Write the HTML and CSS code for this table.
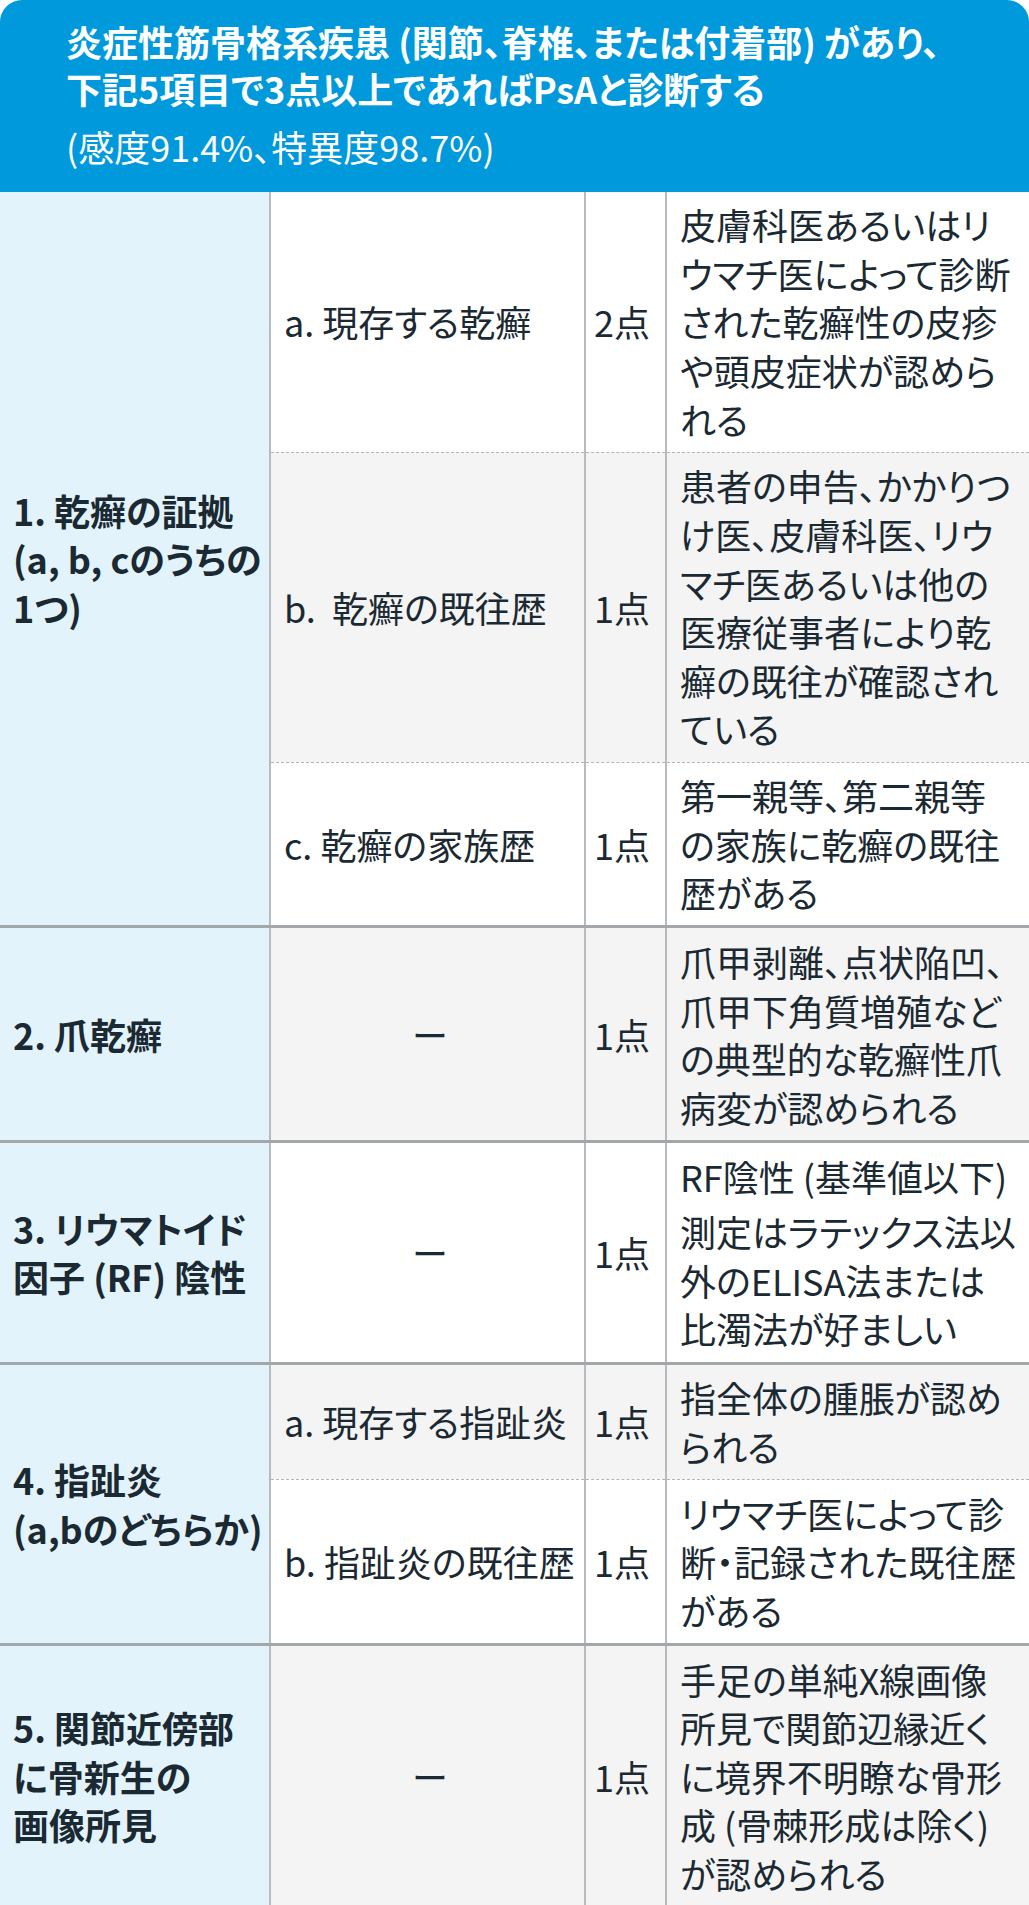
FILE: index.html
```html
<!DOCTYPE html>
<html lang="ja">
<head>
<meta charset="utf-8">
<title>PsA 診断基準</title>
<link rel="stylesheet" href="styles.css">
</head>
<body>
<header class="banner">
  <p class="banner-title">炎症性筋骨格系疾患 (関節、脊椎、または付着部) があり、<br>下記5項目で3点以上であればPsAと診断する</p>
  <p class="banner-sub">(感度91.4%、特異度98.7%)</p>
</header>
<table class="criteria">
  <colgroup>
    <col class="c-label">
    <col class="c-item">
    <col class="c-pt">
    <col class="c-desc">
  </colgroup>
  <tbody>
    <tr>
      <th rowspan="3">1. 乾癬の証拠<br>(a, b, cのうちの<br>1つ)</th>
      <td class="item">a. 現存する乾癬</td>
      <td class="pt">2点</td>
      <td class="desc">皮膚科医あるいはリ<br>ウマチ医によって診断<br>された乾癬性の皮疹<br>や頭皮症状が認めら<br>れる</td>
    </tr>
    <tr class="sub alt">
      <td class="item">b.&nbsp; 乾癬の既往歴</td>
      <td class="pt">1点</td>
      <td class="desc">患者の申告、かかりつ<br>け医、皮膚科医、リウ<br>マチ医あるいは他の<br>医療従事者により乾<br>癬の既往が確認され<br>ている</td>
    </tr>
    <tr class="sub">
      <td class="item">c. 乾癬の家族歴</td>
      <td class="pt">1点</td>
      <td class="desc">第一親等、第二親等<br>の家族に乾癬の既往<br>歴がある</td>
    </tr>
    <tr class="group alt">
      <th>2. 爪乾癬</th>
      <td class="item none">ー</td>
      <td class="pt">1点</td>
      <td class="desc">爪甲剥離、点状陥凹、<br>爪甲下角質増殖など<br>の典型的な乾癬性爪<br>病変が認められる</td>
    </tr>
    <tr class="group">
      <th>3. リウマトイド<br>因子 (RF) 陰性</th>
      <td class="item none">ー</td>
      <td class="pt">1点</td>
      <td class="desc"><p class="para">RF陰性 (基準値以下)</p><p class="para">測定はラテックス法以<br>外のELISA法または<br>比濁法が好ましい</p></td>
    </tr>
    <tr class="group alt">
      <th rowspan="2">4. 指趾炎<br>(a,bのどちらか)</th>
      <td class="item">a. 現存する指趾炎</td>
      <td class="pt">1点</td>
      <td class="desc">指全体の腫脹が認め<br>られる</td>
    </tr>
    <tr class="sub">
      <td class="item">b. 指趾炎の既往歴</td>
      <td class="pt">1点</td>
      <td class="desc">リウマチ医によって診<br>断・記録された既往歴<br>がある</td>
    </tr>
    <tr class="group alt">
      <th>5. 関節近傍部<br>に骨新生の<br>画像所見</th>
      <td class="item none">ー</td>
      <td class="pt">1点</td>
      <td class="desc">手足の単純X線画像<br>所見で関節辺縁近く<br>に境界不明瞭な骨形<br>成 (骨棘形成は除く)<br>が認められる</td>
    </tr>
  </tbody>
</table>
</body>
</html>
```

FILE: styles.css
```css
html, body {
  margin: 0;
  padding: 0;
  background: #ffffff;
}

body {
  font-family: "Noto Sans CJK JP", "Noto Sans", sans-serif;
  color: #1b2932;
  font-feature-settings: "palt";
  width: 1029px;
}

.banner {
  background: #0099dc;
  color: #ffffff;
  border-radius: 22px 22px 0 0;
  padding: 18px 30px 21px 66px;
}

.banner-title {
  margin: 0;
  font-size: 36px;
  line-height: 47px;
  font-weight: 700;
}

.banner-sub {
  margin: 10px 0 0;
  font-size: 36px;
  line-height: 48.6px;
  font-weight: 400;
}

.criteria {
  width: 1029px;
  border-collapse: collapse;
  table-layout: fixed;
  font-size: 36px;
  line-height: 48.6px;
}

.c-label { width: 270px; }
.c-item { width: 315px; }
.c-pt { width: 81px; }
.c-desc { width: 363px; }

.criteria th,
.criteria td {
  padding: 8.6px 8px 8.6px 13px;
  vertical-align: middle;
  text-align: left;
  white-space: nowrap;
}

.criteria th {
  background: #e2f3fb;
  font-weight: 700;
  border-right: 2px solid #b6bbbe;
}

.criteria td {
  background: #ffffff;
  font-weight: 400;
  border-left: 2px solid #b6bbbe;
}

.criteria .pt {
  padding-left: 8px;
  padding-right: 4px;
}

.criteria .none {
  text-align: center;
}

.criteria .alt td {
  background: #f4f4f4;
}

.criteria .sub td {
  border-top: 1px dashed #b3b6b8;
}

.criteria .group th,
.criteria .group td {
  border-top: 3px solid #a2a7aa;
}

.para {
  margin: 0;
}

.para + .para {
  margin-top: 7px;
}
```
